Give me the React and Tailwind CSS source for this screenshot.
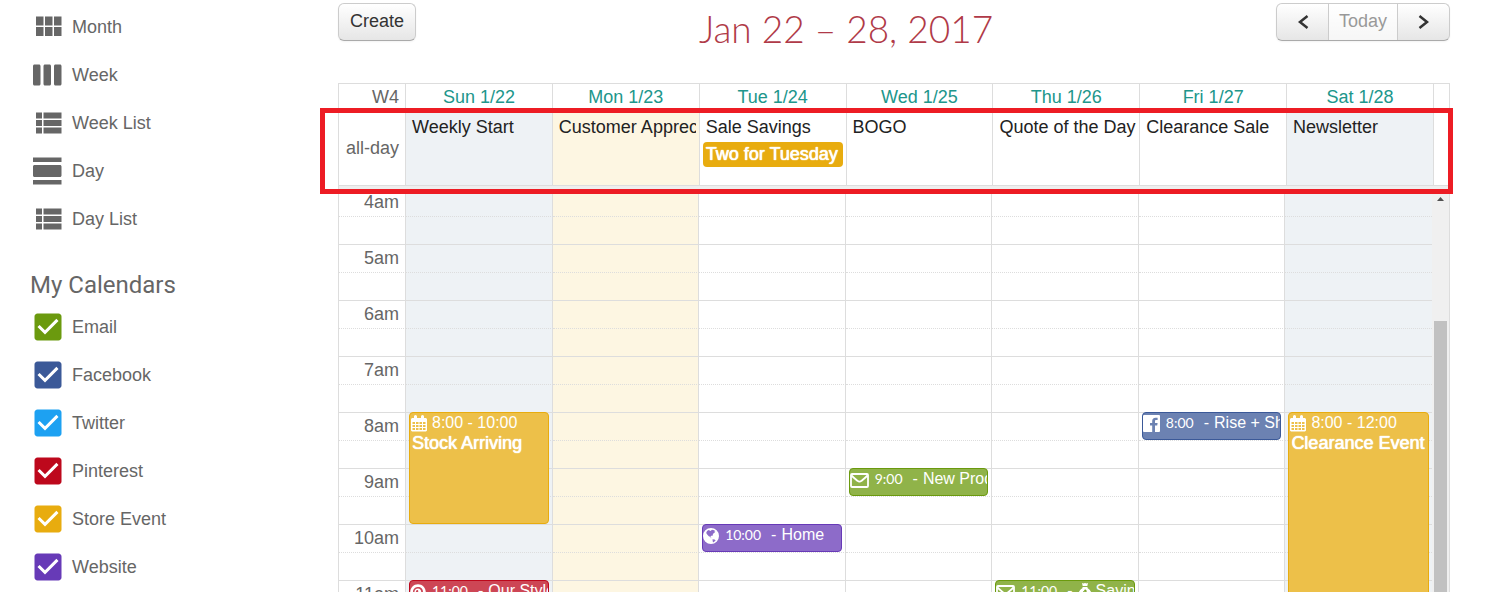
import React, { useState } from "react";
import { FaPinterest } from "react-icons/fa";

const VIEWS = [
  {
    name: "Month",
    path: "M4 11h5V5H4v6zm0 7h5v-6H4v6zm6 0h5v-6h-5v6zm6 0h5v-6h-5v6zm-6-7h5V5h-5v6zm6-6v6h5V5h-5z",
  },
  {
    name: "Week",
    path: "M6 5H3c-.55 0-1 .45-1 1v12c0 .55.45 1 1 1h3c.55 0 1-.45 1-1V6c0-.55-.45-1-1-1zm14 0h-3c-.55 0-1 .45-1 1v12c0 .55.45 1 1 1h3c.55 0 1-.45 1-1V6c0-.55-.45-1-1-1zm-7 0h-3c-.55 0-1 .45-1 1v12c0 .55.45 1 1 1h3c.55 0 1-.45 1-1V6c0-.55-.45-1-1-1z",
  },
  {
    name: "Week List",
    path: "M4 14h4v-4H4v4zm0 5h4v-4H4v4zM4 9h4V5H4v4zm5 5h12v-4H9v4zm0 5h12v-4H9v4zM9 5v4h12V5H9z",
  },
  {
    name: "Day",
    path: "M2 21h19v-3H2v3zM20 8H3c-.55 0-1 .45-1 1v6c0 .55.45 1 1 1h17c.55 0 1-.45 1-1V9c0-.55-.45-1-1-1zM2 3v3h19V3H2z",
  },
  {
    name: "Day List",
    path: "M4 14h4v-4H4v4zm0 5h4v-4H4v4zM4 9h4V5H4v4zm5 5h12v-4H9v4zm0 5h12v-4H9v4zM9 5v4h12V5H9z",
  },
];

const CALENDARS = [
  { name: "Email", color: "text-[#6b9a0e]" },
  { name: "Facebook", color: "text-[#3b5998]" },
  { name: "Twitter", color: "text-[#1da1f2]" },
  { name: "Pinterest", color: "text-[#bd081c]" },
  { name: "Store Event", color: "text-[#e8ac0f]" },
  { name: "Website", color: "text-[#673ab7]" },
];

const DAYS = [
  { label: "Sun 1/22", bg: "bg-[#eef2f5]", allDay: "Weekly Start" },
  { label: "Mon 1/23", bg: "bg-[#fdf6e2]", allDay: "Customer Appreciation" },
  { label: "Tue 1/24", bg: "", allDay: "Sale Savings", promo: "Two for Tuesday" },
  { label: "Wed 1/25", bg: "", allDay: "BOGO" },
  { label: "Thu 1/26", bg: "", allDay: "Quote of the Day" },
  { label: "Fri 1/27", bg: "", allDay: "Clearance Sale" },
  { label: "Sat 1/28", bg: "bg-[#eef2f5]", allDay: "Newsletter" },
];

const HOURS = ["4am", "5am", "6am", "7am", "8am", "9am", "10am", "11am"];

const CalendarIcon = () => (
  <svg viewBox="0 0 16 17" className="h-[17px] w-4 shrink-0" fill="currentColor">
    <path
      fillRule="evenodd"
      d="M1 3h2V1.500a1.500 1.500 0 0 1 3 0V3h4V1.500a1.500 1.500 0 0 1 3 0V3h2l1 1v11.500l-1 1H1l-1-1V4zM1.500 7v2h2.500V7zM5 7v2h2.500V7zM8.500 7v2H11V7zM12 7v2h2.500V7zM1.500 10v2h2.500v-2zM5 10v2h2.500v-2zM8.500 10v2H11v-2zM12 10v2h2.500v-2zM1.500 13v2h2.500v-2zM5 13v2h2.500v-2zM8.500 13v2H11v-2zM12 13v2h2.500v-2z"
    />
  </svg>
);

const EnvelopeIcon = () => (
  <svg viewBox="0 0 19 15" className="mt-1 h-[15px] w-[19px] shrink-0" fill="none" stroke="currentColor" strokeWidth="1.800">
    <rect x="1" y="1" width="17" height="13" rx="1" />
    <path d="M1.500 2.500c2.500 2.500 4.500 4 6 5.300 1.300 1 2.700 1 4 0 1.500-1.300 3.500-2.800 6-5.300" />
  </svg>
);

const GlobeIcon = () => (
  <svg viewBox="0 0 16 16" className="mt-[3px] h-4 w-4 shrink-0" fill="currentColor">
    <path
      fillRule="evenodd"
      d="M8 0a8 8 0 1 1 0 16A8 8 0 0 1 8 0zM4 3L3.200 5l1 1.500 1.600 1.700 1.700.8L8 10.500l.3-.7-.8-1 .6-1.100 1.500.1L10 5.800l1.700-1-.2-1.500 1 .2-1.300-1.300-2.200-.5L7.500 3 5.700 2zM9.500 11.300l2 .1 1.200.8-1.200 1.400-1.500.8-.3-1.500z"
    />
  </svg>
);

const FacebookIcon = () => (
  <svg viewBox="0 0 17 17" className="mt-[2px] h-[17px] w-[17px] shrink-0" fill="currentColor">
    <path d="M1 0h15a1 1 0 0 1 1 1v15a1 1 0 0 1-1 1h-4v-6.500h2.200l.4-2.600H12V6.300c0-.8.300-1.200 1.200-1.200h1.400V2.700h-2.100c-2.200 0-3.300 1.300-3.300 3.300v1.900H7v2.600h2.200V17H1a1 1 0 0 1-1-1V1a1 1 0 0 1 1-1z" />
  </svg>
);

const PinterestIcon = () => <FaPinterest className="mt-[3px] h-4 w-4 shrink-0" />;

const MoneyBag = () => (
  <svg viewBox="0 0 14 17" className="mt-[2px] mr-1 h-[17px] w-[14px] shrink-0">
    <path
      fill="currentColor"
      d="M4 0l1.500.6L7 0l1.500.6L10 0 9.300 3H4.700zM4.500 4h5v1c3 2 4.500 5 4.500 7.500 0 3-2 4.500-4 4.500H4c-2 0-4-1.500-4-4.500C0 10 1.500 7 4.500 5z"
    />
    <path fill="none" stroke="#6b9a0e" d="M9 8.500c-.5-1-3.500-1.200-3.500.6 0 1.700 3.500 1 3.500 2.900 0 1.700-3.300 1.600-4 .3M7.200 6.500v8" />
  </svg>
);

const STORE = "bg-[#edc049] border-[#e8ac0f]";
const EMAIL = "bg-[#90b349] border-[#6b9a0e]";

const EVENTS = [
  { day: 0, hour: "8am", size: "h-[112px]", style: STORE, time: "8:00 - 10:00", title: "Stock Arriving", store: true },
  { day: 6, hour: "8am", size: "h-[224px]", style: STORE, time: "8:00 - 12:00", title: "Clearance Event", store: true },
  { day: 5, hour: "8am", size: "h-7", style: "bg-[#6c82b2] border-[#3b5998]", Icon: FacebookIcon, time: "8:00", title: "Rise + Shine" },
  { day: 3, hour: "9am", size: "h-7", style: EMAIL, Icon: EnvelopeIcon, time: "9:00", title: "New Products" },
  { day: 2, hour: "10am", size: "h-7", style: "bg-[#8d6bc9] border-[#673ab7]", Icon: GlobeIcon, time: "10:00", title: "Home" },
  { day: 0, hour: "11am", size: "h-7", style: "bg-[#cd4655] border-[#bd081c]", Icon: PinterestIcon, time: "11:00", title: "Our Style" },
  { day: 4, hour: "11am", size: "h-7", style: EMAIL, Icon: EnvelopeIcon, time: "11:00", title: "Savings", bag: true },
];

const EventBlock = ({ event }) => {
  const { Icon } = event;
  return (
    <div
      className={`absolute -top-px left-[3px] right-[3px] z-10 overflow-hidden whitespace-nowrap rounded border text-white ${event.size} ${event.style}`}
    >
      {event.store ? (
        <>
          <div className="flex h-5 items-center gap-[5px] pl-px text-base leading-5">
            <CalendarIcon />
            {event.time}
          </div>
          <div className="pl-[2px] text-lg leading-5 [text-shadow:0_0_1px_#fff,0_0_1px_#fff]">
            {event.title}
          </div>
        </>
      ) : (
        <div className="flex h-5 items-start text-base leading-5">
          <Icon />
          <span className="ml-[6px] mr-[10px] font-[Lato] text-[14px] leading-5">{event.time}</span>
          <span className="mr-[5px]">-</span>
          {event.bag && <MoneyBag />}
          <span>{event.title}</span>
        </div>
      )}
    </div>
  );
};

const Sidebar = () => {
  const [checked, setChecked] = useState(CALENDARS.map((c) => c.name));

  const toggle = (name) => {
    setChecked((prev) =>
      prev.includes(name) ? prev.filter((n) => n !== name) : [...prev, name]
    );
  };

  return (
    <aside className="w-[338px] shrink-0 pl-[30px] pt-[3px] text-lg text-[#666]">
      <nav>
        {VIEWS.map((view) => (
          <a key={view.name} href="#" className="flex h-12 items-center gap-[6px]">
            <svg viewBox="0 0 24 24" className="h-9 w-9" fill="currentColor">
              <path d={view.path} />
            </svg>
            {view.name}
          </a>
        ))}
      </nav>
      <h2 className="flex h-[60px] items-center pt-6 font-[Roboto] text-2xl">My Calendars</h2>
      {CALENDARS.map((cal) => (
        <label key={cal.name} className={`flex h-12 items-center gap-[6px] ${cal.color}`}>
          <span className="relative h-9 w-9">
            <input
              type="checkbox"
              checked={checked.includes(cal.name)}
              onChange={() => toggle(cal.name)}
              className="peer absolute inset-1 appearance-none"
            />
            <svg
              viewBox="0 0 24 24"
              className="pointer-events-none absolute inset-0 opacity-40 peer-checked:opacity-100"
              fill="currentColor"
            >
              <path d="M19 3H5c-1.110 0-2 .9-2 2v14c0 1.100.89 2 2 2h14c1.110 0 2-.9 2-2V5c0-1.100-.89-2-2-2zm-9 14l-5-5 1.410-1.410L10 14.170l7.590-7.590L19 8l-9 9z" />
            </svg>
          </span>
          <span className="text-[#666]">{cal.name}</span>
        </label>
      ))}
    </aside>
  );
};

const Toolbar = () => (
  <header className="flex h-[83px] shrink-0 items-start justify-between pt-[3px] text-lg text-[#333]">
    <button className="h-[38px] rounded-md border border-[#ccc] border-b-[#aaa] bg-linear-to-b from-white to-[#e6e6e6] px-[11px] pb-[2px] shadow-xs">
      Create
    </button>
    <h1 className="font-[Lato] text-[37px] leading-[52px] font-light text-[#b03a48]">
      Jan 22 – 28, 2017
    </h1>
    <div className="flex h-[38px] rounded-md border border-[#ccc] border-b-[#aaa] bg-linear-to-b from-white to-[#e6e6e6] shadow-xs">
      <button aria-label="Previous week" className="flex w-[51px] items-center justify-center">
        <svg viewBox="0 0 12 14" className="h-[14px] w-3" fill="none" stroke="currentColor" strokeWidth="2.500">
          <path d="M10.500 1L3 7l7.500 6" />
        </svg>
      </button>
      <button disabled className="w-[70px] border-x border-[#ccc] bg-white/65 pb-[2px] text-[#999]">
        Today
      </button>
      <button aria-label="Next week" className="flex w-[51px] items-center justify-center">
        <svg viewBox="0 0 12 14" className="h-[14px] w-3" fill="none" stroke="currentColor" strokeWidth="2.500">
          <path d="M1.500 1L9 7l-7.500 6" />
        </svg>
      </button>
    </div>
  </header>
);

const WeekHeader = () => (
  <table className="w-full table-fixed border-separate border-spacing-0 text-lg">
    <thead>
      <tr className="h-[26px] leading-6">
        <th className="w-[67px] border-b border-r border-[#ddd] pr-[6px] text-right font-normal text-[#666]">
          W4
        </th>
        {DAYS.map((day) => (
          <th key={day.label} className="border-b border-r border-[#ddd] font-normal text-[#20968b]">
            {day.label}
          </th>
        ))}
        <th className="w-[15px] border-b border-[#ddd]" />
      </tr>
    </thead>
    <tbody>
      <tr className="h-[76px]">
        <td className="border-b border-r border-[#ddd] pr-[6px] text-right text-[#666]">all-day</td>
        {DAYS.map((day) => (
          <td
            key={day.label}
            className={`border-b border-r border-[#ddd] px-[3px] pt-[5px] align-top text-[#222] ${day.bg}`}
          >
            <div className="mb-[2px] overflow-hidden whitespace-nowrap pl-[3px] leading-[25px]">
              {day.allDay}
            </div>
            {day.promo && (
              <div className="overflow-hidden whitespace-nowrap rounded bg-[#e8ac0f] pl-[3px] leading-[25px] text-white [text-shadow:0_0_1px_#fff,0_0_1px_#fff]">
                {day.promo}
              </div>
            )}
          </td>
        ))}
        <td className="border-b border-[#ddd]" />
      </tr>
    </tbody>
  </table>
);

const SlotRow = ({ hour, half }) => (
  <tr className="h-7">
    <td
      className={`w-[67px] border-r border-t border-[#ddd] pr-[6px] text-right leading-[27px] text-[#666] ${
        half ? "[border-top-style:dotted]" : ""
      }`}
    >
      {half ? "" : hour}
    </td>
    {DAYS.map((day, i) => (
      <td
        key={day.label}
        className={`relative border-r border-t border-[#ddd] last:border-r-0 ${day.bg} ${
          half ? "[border-top-style:dotted]" : ""
        }`}
      >
        {!half &&
          EVENTS.filter((e) => e.day === i && e.hour === hour).map((e) => (
            <EventBlock key={e.title} event={e} />
          ))}
      </td>
    ))}
  </tr>
);

const App = () => {
  return (
    <div className="flex h-screen overflow-hidden bg-white font-['Liberation_Sans',Arial,sans-serif]">
      <Sidebar />
      <main className="mr-[43px] flex min-w-0 flex-1 flex-col">
        <Toolbar />
        <div className="relative flex min-h-0 flex-1 flex-col border border-b-0 border-[#ddd]">
          <WeekHeader />
          <div className="relative z-20 h-[3px] shrink-0 bg-[#eee]" />
          <div className="-mt-px flex min-h-0 flex-1 overflow-hidden">
            <div className="min-w-0 flex-1">
              <table className="w-full table-fixed border-separate border-spacing-0 text-lg">
                <tbody>
                  {HOURS.map((hour) => (
                    <React.Fragment key={hour}>
                      <SlotRow hour={hour} />
                      <SlotRow hour={hour} half />
                    </React.Fragment>
                  ))}
                </tbody>
              </table>
            </div>
            <div className="flex w-[17px] shrink-0 flex-col items-center bg-[#f0f0f0] pt-[9px]">
              <svg viewBox="0 0 7 4" className="h-1 w-[7px]" fill="#505050">
                <path d="M0 4h7L3.500 0z" />
              </svg>
              <div className="mt-[120px] w-[13px] flex-1 bg-[#c1c1c1]" />
            </div>
          </div>
          {/* highlight around the all-day row */}
          <div className="pointer-events-none absolute -left-[19px] -right-1 top-6 z-30 h-[86px] border-[5px] border-[#ed1c24]" />
        </div>
      </main>
    </div>
  );
};

export default App;
